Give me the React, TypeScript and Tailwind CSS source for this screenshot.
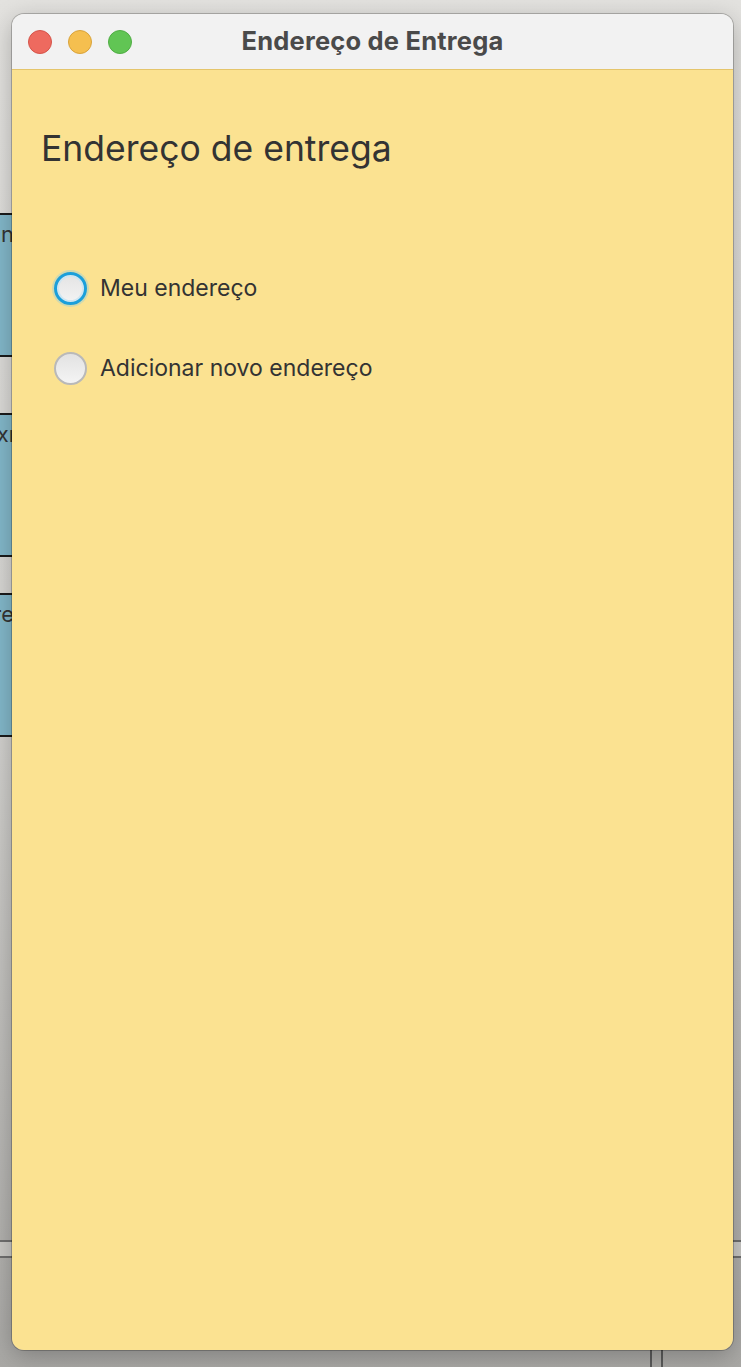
import React from "react";

const FONT = { fontFamily: "Inter, 'Noto Sans', sans-serif" };

function Radio({ label, focused }: { label: string; focused?: boolean }) {
  return (
    <label className="flex items-center gap-[13px] h-[40px]">
      <span
        className={
          focused
            ? "w-[33px] h-[33px] rounded-full border-[3px] border-[#1a9fdb] bg-gradient-to-b from-[#e4e4e4] to-[#f3f3f3] shadow-[0_0_0_2px_rgba(120,200,240,0.35),inset_0_0_0_2px_#cfe6f2]"
            : "w-[33px] h-[33px] rounded-full border-[2px] border-[#b9b9b9] bg-gradient-to-b from-[#e2e2e2] to-[#f4f4f4]"
        }
      />
      <span className="text-[23px] text-[#333333]">{label}</span>
    </label>
  );
}

function BackPanel({ text }: { text: string }) {
  return (
    <div className="w-[14px] h-[144px] bg-[#82b7c9] border-y-2 border-[#1b1b1b] overflow-hidden flex justify-end pt-[5px]">
      <span className="text-[22px] leading-[28px] text-[#333] whitespace-nowrap">{text}</span>
    </div>
  );
}

export default function App() {
  return (
    <div
      className="relative w-[741px] h-[1367px] overflow-hidden bg-gradient-to-b from-[#e3e2df] via-[#d4d3d0] to-[#a9a8a5]"
      style={FONT}
    >
      {/* desktop behind the window */}
      <div className="h-full flex flex-col pt-[213px]">
        <div className="flex flex-col gap-[56px]">
          <BackPanel text="n" />
          <div className="flex flex-col gap-[36px]">
            <BackPanel text="xı" />
            <BackPanel text="re" />
          </div>
        </div>
        <div className="flex-1" />
        <div className="h-[18px] bg-[#c9c8c5] border-y-2 border-[#6f6f6f]" />
        <div className="h-[109px] pl-[650px] flex">
          <div className="w-[13px] border-x-2 border-[#5a5a5a] bg-[#a9a8a5]" />
        </div>
      </div>

      {/* window */}
      <div className="absolute left-[12px] top-[14px] w-[721px] h-[1336px] rounded-[12px] overflow-hidden flex flex-col shadow-[0_0_0_1px_rgba(0,0,0,0.22),0_6px_24px_rgba(0,0,0,0.25)]">
        <div className="relative h-[56px] shrink-0 bg-[#f2f2f2] border-b-[1.5px] border-[#e5c56b] flex items-center justify-center">
          <div className="absolute left-[16px] top-[16px] flex gap-[16px]">
            <span className="w-[24px] h-[24px] rounded-full bg-[#ee6a5f] border border-[#d5544a]" />
            <span className="w-[24px] h-[24px] rounded-full bg-[#f5bf4f] border border-[#d9a33b]" />
            <span className="w-[24px] h-[24px] rounded-full bg-[#61c554] border border-[#50ad44]" />
          </div>
          <span className="text-[25.5px] font-bold text-[#4a4a4a] tracking-[0.2px]">Endereço de Entrega</span>
        </div>
        <div className="flex-1 bg-[#fbe291] px-[29px] pt-[56px]">
          <h1 className="text-[35.5px] leading-[46px] text-[#333333]">Endereço de entrega</h1>
          <div className="mt-[96px] pl-[13px] flex flex-col gap-[40px]">
            <Radio label="Meu endereço" focused />
            <Radio label="Adicionar novo endereço" />
          </div>
        </div>
      </div>
    </div>
  );
}
